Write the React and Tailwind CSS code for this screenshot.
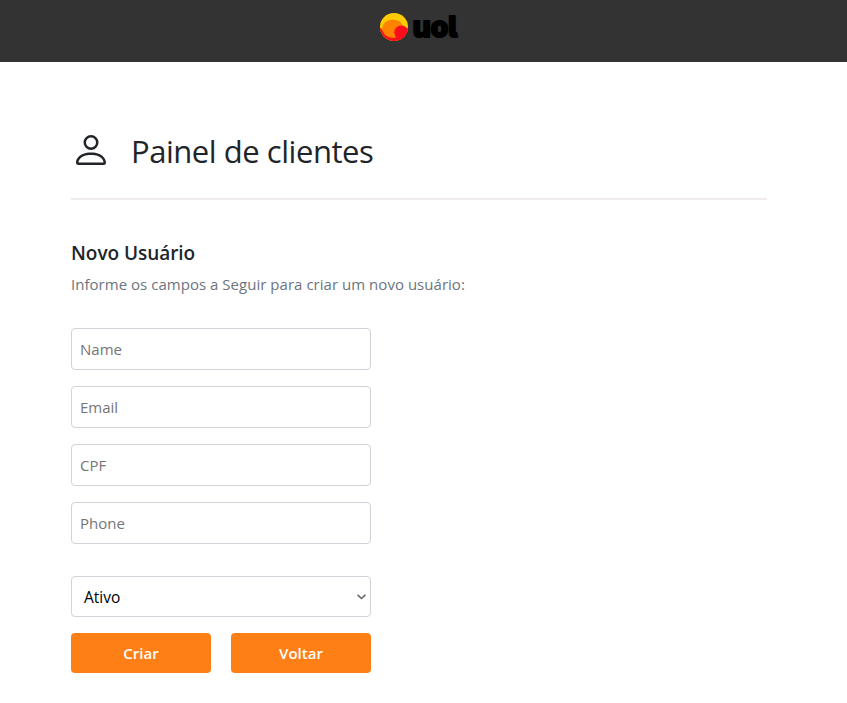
import { BsPerson } from "react-icons/bs";

const fields = ["Name", "Email", "CPF", "Phone"];

function Logo() {
  return (
    <svg
      width="80"
      height="30"
      viewBox="0 0 80 30"
      role="img"
      aria-label="uol"
      className="overflow-visible"
    >
      <defs>
        <clipPath id="ball">
          <circle cx="15" cy="15" r="14" />
        </clipPath>
      </defs>
      <g clipPath="url(#ball)">
        <rect width="30" height="30" fill="#ffcb05" />
        <path d="M0 15.500C2 15.500 3 17 4 19L12 22L29 16V30H0Z" fill="#fb0d1b" />
        <ellipse cx="13.800" cy="16.700" rx="10.600" ry="9.300" fill="#ff8200" />
        <circle cx="22.300" cy="20.500" r="7" fill="#fb0d1b" />
      </g>
      <text
        x="33.800"
        y="24.800"
        textLength="44.500"
        lengthAdjust="spacingAndGlyphs"
        className="fill-black stroke-black font-['Inter'] text-[28.5px] leading-none font-extrabold [font-feature-settings:'cv05']"
        strokeWidth="2.200"
        strokeLinejoin="round"
      >
        uol
      </text>
    </svg>
  );
}

export default function App() {
  return (
    <div className="min-h-[703px] bg-white font-['Open_Sans','Noto_Sans',sans-serif] text-[#212529]">
      <header className="flex h-[62px] justify-center bg-[#333333] pt-3 pr-[9px]">
        <Logo />
      </header>
      <main className="ml-[71px] w-[696px] pt-[68px]">
        <div className="flex h-[70px] items-start gap-5 border-b-2 border-[#f0ecee]">
          <BsPerson size={40} />
          <h1 className="text-[31px] leading-[42px] tracking-[-0.46px]">Painel de clientes</h1>
        </div>
        <h2 className="mt-[39px] text-[19px] leading-7 font-semibold tracking-[-0.05px]">Novo Usuário</h2>
        <p className="mt-[5px] text-[15px] leading-6 tracking-[0.03px] text-[#6c757d]">
          Informe os campos a Seguir para criar um novo usuário:
        </p>
        <form className="mt-8 w-[300px]">
          <div className="flex flex-col gap-4">
            {fields.map((name) => (
              <input
                key={name}
                placeholder={name}
                className="h-[42px] w-full rounded border border-[#ced4da] px-2 pb-px text-[15px] placeholder:text-[#757575]"
              />
            ))}
          </div>
          <div className="mt-8 flex h-[41px] items-center justify-between rounded border border-[#ced4da] pr-1 pl-3 text-black">
            <span className="pt-[3px] text-[15.5px]">Ativo</span>
            <svg width="9" height="6" viewBox="0 0 9 6" fill="none" stroke="#666" strokeWidth="1.600">
              <path d="M.6.8 4.500 4.500 8.400.8" />
            </svg>
          </div>
          <div className="mt-4 flex gap-5">
            <button type="button" className="h-10 w-[140px] rounded bg-[#ff7f17] text-[15px] font-semibold text-white">
              Criar
            </button>
            <button type="button" className="h-10 w-[140px] rounded bg-[#ff7f17] text-[15px] font-semibold text-white">
              Voltar
            </button>
          </div>
        </form>
      </main>
    </div>
  );
}
